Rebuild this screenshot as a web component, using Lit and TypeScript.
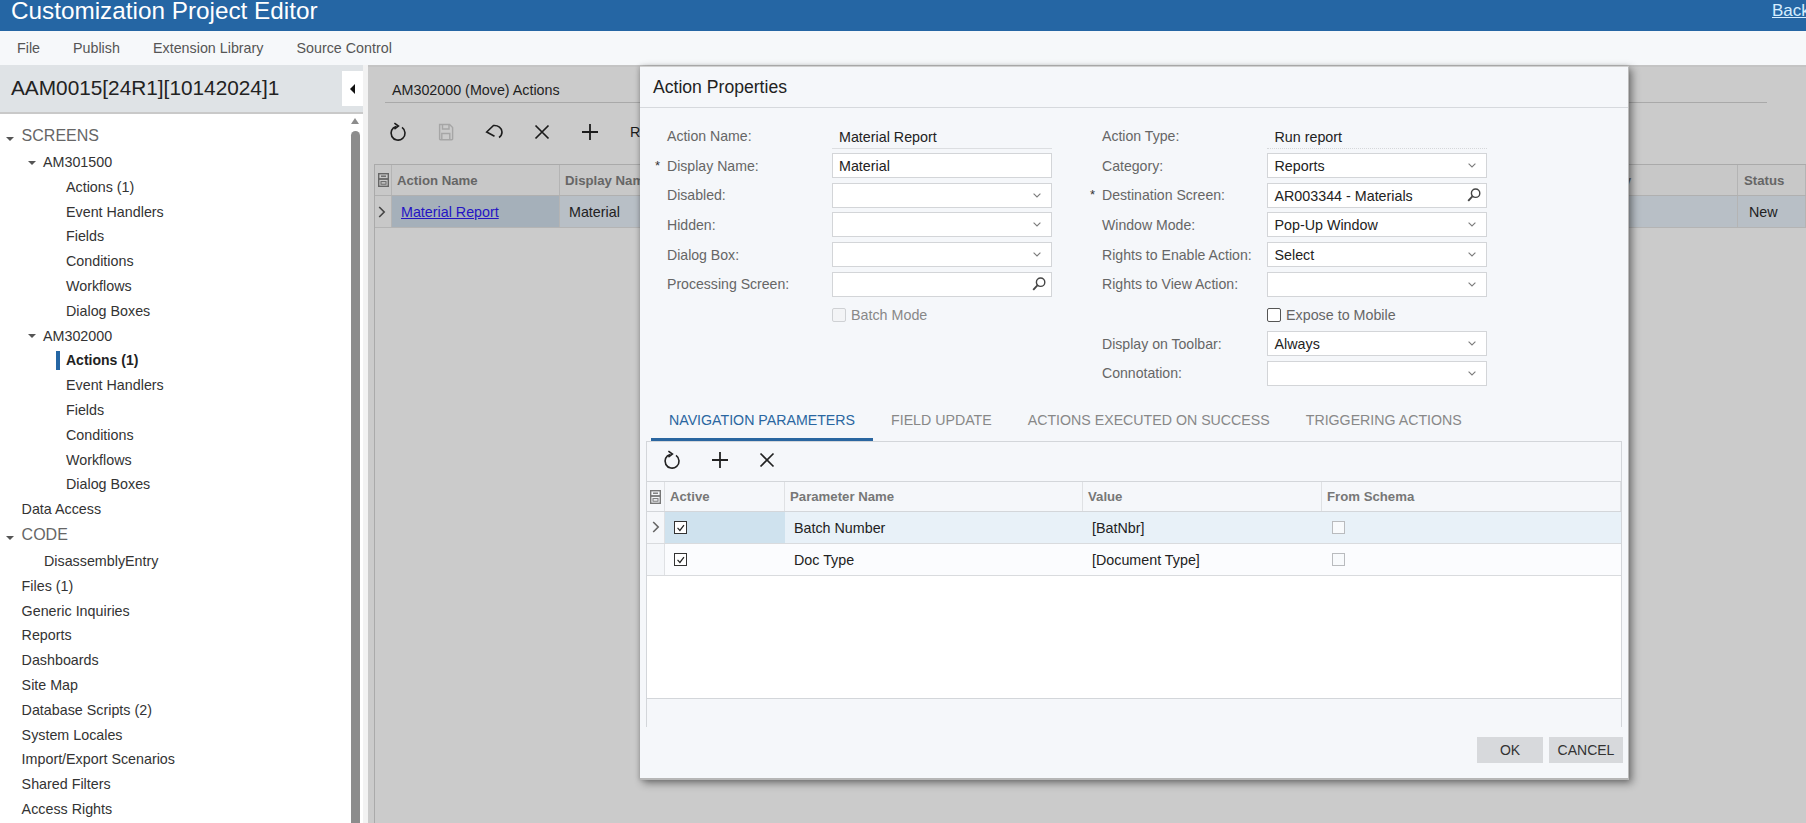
import { LitElement, html, css, svg } from "lit";
import { customElement } from "lit/decorators.js";

const refreshIcon = (c: string) => html`<svg width="20" height="20" viewBox="0 0 20 20" fill="none" stroke="${c}" stroke-width="1.6"><path d="M14 5.4A7 7 0 1 1 8.2 4.4"/><path d="M6.4 1.2 L10.4 4 L6.4 7"/></svg>`;
const saveIcon = html`<svg width="20" height="20" viewBox="0 0 20 20" fill="none" stroke="#a6a6a6" stroke-width="1.4"><path d="M4 2.5h10l3 3v11.5a.8.8 0 0 1-.8.8h-11.4a.8.8 0 0 1-.8-.8z" transform="translate(-.4 0)"/><path d="M6.5 2.5v4.5h6.5v-4.5M5.8 18v-6.5h8v6.5"/></svg>`;
const undoIcon = html`<svg width="20" height="20" viewBox="0 0 20 20" fill="none" stroke="#1c1c1c" stroke-width="1.6"><path d="M10.5 14.2 L2.7 10 L9.5 3.5 C14 3 18 6 18 10 C18 12.5 16.5 14.5 15 15.5"/></svg>`;
const closeIcon = (c: string) => html`<svg width="20" height="20" viewBox="0 0 20 20" fill="none" stroke="${c}" stroke-width="1.7"><path d="M3.5 3.5 L16.5 16.5 M16.5 3.5 L3.5 16.5"/></svg>`;
const plusIcon = (c: string) => html`<svg width="20" height="20" viewBox="0 0 20 20" fill="none" stroke="${c}" stroke-width="1.8"><path d="M10 2 V18 M2 10 H18"/></svg>`;
const chevronDown = html`<svg class="ctl-ic chev" width="8" height="5" viewBox="0 0 8 5" fill="none" stroke="#7c7c7c" stroke-width="1.1"><path d="M.6 .6 L4 4 L7.4 .6"/></svg>`;
const searchIcon = html`<svg class="ctl-ic" width="14" height="14" viewBox="0 0 14 14" fill="none" stroke="#444" stroke-width="1.4"><circle cx="8.6" cy="5.2" r="4.2"/><path d="M5.4 8.4 L1.2 12.8" stroke-width="1.9"/></svg>`;
const colIcon = (c: string) => html`<svg width="11" height="14" viewBox="0 0 11 14" fill="none" stroke="${c}"><rect x=".7" y=".7" width="9.6" height="12.6" stroke-width="1.4"/><path d="M3 3.2h5" stroke-width="1.4"/><path d="M.7 6h9.6" stroke-width="1.8"/><rect x="3" y="8.6" width="5" height="2.6" stroke-width="1"/></svg>`;
const rowChevron = (c: string) => html`<svg width="8" height="12" viewBox="0 0 8 12" fill="none" stroke="${c}" stroke-width="1.6"><path d="M1.2 1 L6.2 6 L1.2 11"/></svg>`;

const tick = svg`<path d="M3 7 L5.8 10 L10.6 3.6" fill="none" stroke="#222" stroke-width="1.4"/>`;

type Row = { t: string; k: string; bold?: boolean };
const tree: Row[] = [
  { t: "SCREENS", k: "sec" },
  { t: "AM301500", k: "scr" },
  { t: "Actions (1)", k: "leaf" },
  { t: "Event Handlers", k: "leaf" },
  { t: "Fields", k: "leaf" },
  { t: "Conditions", k: "leaf" },
  { t: "Workflows", k: "leaf" },
  { t: "Dialog Boxes", k: "leaf" },
  { t: "AM302000", k: "scr" },
  { t: "Actions (1)", k: "leaf", bold: true },
  { t: "Event Handlers", k: "leaf" },
  { t: "Fields", k: "leaf" },
  { t: "Conditions", k: "leaf" },
  { t: "Workflows", k: "leaf" },
  { t: "Dialog Boxes", k: "leaf" },
  { t: "Data Access", k: "top" },
  { t: "CODE", k: "sec" },
  { t: "DisassemblyEntry", k: "code" },
  { t: "Files (1)", k: "top" },
  { t: "Generic Inquiries", k: "top" },
  { t: "Reports", k: "top" },
  { t: "Dashboards", k: "top" },
  { t: "Site Map", k: "top" },
  { t: "Database Scripts (2)", k: "top" },
  { t: "System Locales", k: "top" },
  { t: "Import/Export Scenarios", k: "top" },
  { t: "Shared Filters", k: "top" },
  { t: "Access Rights", k: "top" },
];

type Field = { label: string; star?: boolean; kind: "text" | "ro" | "sel" | "look" | "check"; value?: string; dis?: boolean };
const leftF: Field[] = [
  { label: "Action Name:", kind: "ro", value: "Material Report" },
  { label: "Display Name:", star: true, kind: "text", value: "Material" },
  { label: "Disabled:", kind: "sel" },
  { label: "Hidden:", kind: "sel" },
  { label: "Dialog Box:", kind: "sel" },
  { label: "Processing Screen:", kind: "look" },
  { label: "", kind: "check", value: "Batch Mode", dis: true },
];
const rightF: Field[] = [
  { label: "Action Type:", kind: "ro", value: "Run report", dis: true },
  { label: "Category:", kind: "sel", value: "Reports" },
  { label: "Destination Screen:", star: true, kind: "look", value: "AR003344 - Materials" },
  { label: "Window Mode:", kind: "sel", value: "Pop-Up Window" },
  { label: "Rights to Enable Action:", kind: "sel", value: "Select" },
  { label: "Rights to View Action:", kind: "sel" },
  { label: "", kind: "check", value: "Expose to Mobile" },
  { label: "Display on Toolbar:", kind: "sel", value: "Always" },
  { label: "Connotation:", kind: "sel" },
];

@customElement("app-root")
export class AppRoot extends LitElement {
  static styles = css`
    :host { display: block; position: relative; width: 1806px; height: 823px; overflow: hidden; background: #fff;
      font-family: "Liberation Sans", Arial, sans-serif; font-size: 14.3px; color: #222; }
    .head { height: 31px; background: #2566a4; display: flex; justify-content: space-between; overflow: hidden; }
    .head .title { color: #fff; font-size: 24.3px; line-height: 21px; padding-left: 11px; }
    .head a { color: #d6eeff; font-size: 17px; line-height: 21px; height: 19px; text-decoration: underline; width: 34px; overflow: hidden; white-space: nowrap; }
    .menu { height: 34px; background: #f6f8fa; display: flex; align-items: center; color: #555; }
    .menu .m1 { margin-left: 17px; width: 56px; }
    .menu .m2 { width: 80px; }
    .menu .m3 { width: 143.5px; }
    .main { display: flex; height: 758px; }
    .side { width: 363px; flex: none; display: flex; flex-direction: column; }
    .side-head { height: 47px; flex: none; background: #dfe3e6; border-bottom: 2px solid #c9c9c9; display: flex; align-items: center; justify-content: space-between; }
    .side-head .pn { font-size: 20.8px; padding-left: 11px; color: #222; padding-bottom: 2px; }
    .collapse { width: 21px; height: 35px; background: #fff; display: flex; align-items: center; padding-left: 8px; box-sizing: border-box; }
    .collapse i { border-style: solid; border-width: 5px 5px 5px 0; border-color: transparent #111 transparent transparent; }
    .side-body { flex: 1; display: flex; min-height: 0; }
    .tree { flex: 1; padding-top: 8.6px; }
    .row { height: 24.8px; display: flex; align-items: center; color: #333; white-space: nowrap; position: relative; }
    .row.sec { height: 27px; box-sizing: border-box; font-size: 16px; color: #666; padding-left: 21.6px; }
    .row.scr { padding-left: 43px; }
    .row.leaf { padding-left: 66px; }
    .row.top { padding-left: 21.6px; }
    .row.code { padding-left: 44px; padding-top: 1px; box-sizing: border-box; }
    .row.bold { font-weight: bold; color: #222; font-size: 14px; }
    .row.bold::before { content: ""; position: absolute; left: 56px; top: 3px; width: 4px; height: 19px; background: #2566a4; }
    .tri { position: absolute; border-style: solid; border-width: 4px 4px 0 4px; border-color: #555 transparent transparent transparent; }
    .row.sec .tri { left: 6px; top: 14px; }
    .row.scr .tri { left: 28px; top: 11px; }
    .scroll { width: 12px; flex: none; position: relative; }
    .scroll .up { position: absolute; left: 0; top: 4px; border-style: solid; border-width: 0 4.5px 6px 4.5px; border-color: transparent transparent #8c8c8c transparent; }
    .scroll .bar { position: absolute; left: 0; top: 17px; bottom: 0; width: 9px; background: #8c8c8c; border-radius: 5px 5px 0 0; }
    .split { width: 5px; flex: none; background: #f2f2f2; }
    .pane { flex: 1; background: #cbcbcb; display: flex; flex-direction: column; padding-left: 6px; min-width: 0; border-top: 2px solid #c4c4c4; }
    .ptab { margin: 0 39px 0 11px; height: 25px; padding-top: 10px; border-bottom: 1px solid #a9a9a9; display: flex; align-items: center; padding-left: 7px; color: #1f1f1f; }
    .ptool { height: 58px; padding-bottom: 3px; display: flex; align-items: center; padding-left: 14px; gap: 28px; color: #1c1c1c; }
    .ptool span { margin-left: 2px; }
    .gridb { border-left: 1px solid #aaa; flex: 1; }
    .g-h, .g-r { display: grid; grid-template-columns: 17px 168px 1009px 169px 1fr; height: 32px; }
    .g-h { border-top: 1px solid #aaa; border-bottom: 1px solid #b0b0b0; background: #c8c8c8; color: #666; font-weight: bold; font-size: 13.2px; box-sizing: border-box; }
    .g-r { border-bottom: 1px solid #b4b4b4; box-sizing: border-box; background: #b8bfc6; }
    .g-h > div, .g-r > div { display: flex; align-items: center; padding-left: 5px; border-right: 1px solid #b4b4b4; white-space: nowrap; min-width: 0; }
    .g-h > div:first-child, .g-r > div:first-child { padding-left: 3px; }
    .g-h > div:last-child { padding-left: 6px; }
    .g-r > .sel { background: #a5b0ba; padding-left: 9px; }
    .g-r > .st { padding-left: 11px; }
    .g-r > .dn { padding-left: 9px; }
    .g-r a { color: #2414c4; text-decoration: underline; }
    .g-r > div:first-child { background: #c8c8c8; }
    .dlg { position: absolute; left: 640px; top: 66px; width: 989px; height: 714px; box-sizing: border-box; background: #f5f7fa; border-top: 1px solid #d0d0d0; border-right: 1px solid #bbb; border-bottom: 2px solid #b6b6b6; box-shadow: 3px 3px 8px rgba(0,0,0,.45), -1px 0 4px rgba(0,0,0,.15); display: flex; flex-direction: column; }
    .dlg-t { height: 39px; padding-top: 1px; flex: none; border-bottom: 1px solid #d6d9dd; display: flex; align-items: center; padding-left: 13px; font-size: 17.6px; color: #222; }
    .form { display: flex; padding: 15.4px 0 0 17px; gap: 40px; height: 278px; flex: none; box-sizing: border-box; }
    .fcol { display: flex; flex-direction: column; gap: 4.7px; }
    .frow { display: grid; grid-template-columns: 10px 165px 220px; height: 25px; align-items: center; }
    .star { font-size: 13px; color: #333; line-height: 10px; margin-left: -2px; }
    .lab { color: #666; font-size: 14.1px; white-space: nowrap; }
    .ctl { grid-column: 3; height: 25px; box-sizing: border-box; border: 1px solid #d3d5d8; background: #fff; display: flex; align-items: center; justify-content: space-between; padding: 0 5px 0 6px; color: #222; }
    .ctl > span { padding-top: 1px; }
    .fcol:last-child .ctl { padding-left: 6.5px; }
    .ctl .ctl-ic { flex: none; margin-left: auto; }
    .ctl .chev { margin-right: 5px; }
    .ro { grid-column: 3; height: 25px; padding-top: 1px; box-sizing: border-box; margin-top: 1px; border-bottom: 1px solid #dcdee1; display: flex; align-items: center; padding-left: 7px; color: #222; }
    .ro.dot { border-bottom: 1px dotted #d5d7da; padding-left: 7.5px; }
    .chk { grid-column: 3; display: flex; align-items: center; gap: 5px; color: #666; padding-top: 1px; }
    .box { width: 14px; height: 14px; box-sizing: border-box; border: 1px solid #555; border-radius: 2px; background: #fff; display: inline-block; flex: none; }
    .chk.dis { color: #888; }
    .chk.dis .box { border-color: #cfd1d4; background: #f3f4f6; }
    .tabs { display: flex; margin-left: 11px; height: 40px; flex: none; margin-top: 15px; font-size: 14.2px; }
    .tab { padding: 0 18px; display: flex; align-items: center; color: #888; height: 37px; white-space: nowrap; }
    .tab.on { color: #2a66a0; border-bottom: 3px solid #2a66a0; }
    .panel { margin: 0 6px 0 6px; height: 286px; flex: none; box-sizing: border-box; border: 1px solid #d3d6da; border-bottom: 0; display: flex; flex-direction: column; }
    .ptl { height: 39px; padding-bottom: 4px; box-sizing: border-box; flex: none; display: flex; align-items: center; padding-left: 15px; gap: 27.5px; }
    .pg { height: 218px; flex: none; box-sizing: border-box; border-top: 1px solid #d3d6da; border-bottom: 1px solid #d3d6da; background: #fff; }
    .pg-h, .pg-r { display: grid; grid-template-columns: 18px 120px 298px 239px 1fr; }
    .pg-h { height: 30px; box-sizing: border-box; background: #f5f7fa; color: #777; font-weight: bold; font-size: 13.2px; border-bottom: 1px solid #d3d6da; }
    .pg-h > div { display: flex; align-items: center; padding-left: 5px; border-right: 1px solid #dfe1e4; }
    .pg-h > div:first-child { padding-left: 3px; }
    .pg-r { height: 32px; box-sizing: border-box; background: #fbfcfe; border-bottom: 1px solid #d9dbde; }
    .pg-r > div { display: flex; align-items: center; padding: 1px 0 0 9px; min-width: 0; }
    .pg-r > .c0 { padding: 0 0 2px 5px; background: #f5f7fa; border-right: 1px solid #dfe1e4; }
    .pg-r > .ck { padding: 0 0 0 9px; }
    .pg-r.a { background: #e8f1f8; }
    .pg-r.a > .ck.act { background: #cfe2ee; }
    .pg-r > .sc { padding: 0 0 0 10px; }
    .pg-r .cb { width: 13px; height: 13px; box-sizing: border-box; border: 1.4px solid #333; background: #fff; display: block; }
    .pg-r .cb.off { border: 1px solid #b9bbbe; background: #f8fafc; }
    .foot { display: flex; justify-content: flex-end; gap: 6px; padding: 10px 5px 0 0; }
    .btn { height: 26px; background: #d7d9dc; display: flex; align-items: center; justify-content: center; color: #333; font-size: 14px; }
    .btn.ok { width: 66px; }
    .btn.cn { width: 74px; }
  `;

  private field(f: Field) {
    const star = html`<span class="star">${f.star ? "*" : ""}</span>`;
    const lab = html`<span class="lab">${f.label}</span>`;
    if (f.kind === "check") {
      return html`<div class="frow"><span></span><span></span><label class="chk ${f.dis ? "dis" : ""}"><span class="box"></span>${f.value}</label></div>`;
    }
    if (f.kind === "ro") {
      return html`<div class="frow">${star}${lab}<div class="ro ${f.dis ? "dot" : ""}">${f.value}</div></div>`;
    }
    const ic = f.kind === "sel" ? chevronDown : f.kind === "look" ? searchIcon : "";
    return html`<div class="frow">${star}${lab}<div class="ctl"><span>${f.value ?? ""}</span>${ic}</div></div>`;
  }

  private paramRow(name: string, val: string, active: boolean) {
    return html`<div class="pg-r ${active ? "a" : ""}">
      <div class="c0">${active ? rowChevron("#666") : ""}</div>
      <div class="ck act"><svg class="cb" viewBox="0 0 13 13">${tick}</svg></div>
      <div>${name}</div><div>${val}</div>
      <div class="sc"><span class="cb off"></span></div>
    </div>`;
  }

  render() {
    return html`
      <div class="head"><div class="title">Customization Project Editor</div><a>Back</a></div>
      <div class="menu"><span class="m1">File</span><span class="m2">Publish</span><span class="m3">Extension Library</span><span>Source Control</span></div>
      <div class="main">
        <div class="side">
          <div class="side-head"><span class="pn">AAM0015[24R1][10142024]1</span><span class="collapse"><i></i></span></div>
          <div class="side-body">
            <div class="tree">
              ${tree.map((r) => html`<div class="row ${r.k} ${r.bold ? "bold" : ""}">${r.k === "sec" || r.k === "scr" ? html`<span class="tri"></span>` : ""}${r.t}</div>`)}
            </div>
            <div class="scroll"><span class="up"></span><span class="bar"></span></div>
          </div>
        </div>
        <div class="split"></div>
        <div class="pane">
          <div class="ptab">AM302000 (Move) Actions</div>
          <div class="ptool">
            ${refreshIcon("#1c1c1c")}${saveIcon}${undoIcon}${closeIcon("#1c1c1c")}${plusIcon("#1c1c1c")}<span>Reload</span>
          </div>
          <div class="gridb">
            <div class="g-h"><div>${colIcon("#666")}</div><div>Action Name</div><div>Display Name</div><div>Category</div><div>Status</div></div>
            <div class="g-r"><div>${rowChevron("#444")}</div><div class="sel"><a>Material Report</a></div><div class="dn">Material</div><div></div><div class="st">New</div></div>
          </div>
        </div>
      </div>
      <div class="dlg">
        <div class="dlg-t">Action Properties</div>
        <div class="form">
          <div class="fcol">${leftF.map((f) => this.field(f))}</div>
          <div class="fcol">${rightF.map((f) => this.field(f))}</div>
        </div>
        <div class="tabs">
          <div class="tab on">NAVIGATION PARAMETERS</div><div class="tab">FIELD UPDATE</div><div class="tab">ACTIONS EXECUTED ON SUCCESS</div><div class="tab">TRIGGERING ACTIONS</div>
        </div>
        <div class="panel">
          <div class="ptl">${refreshIcon("#222")}${plusIcon("#222")}${closeIcon("#222")}</div>
          <div class="pg">
            <div class="pg-h"><div>${colIcon("#777")}</div><div>Active</div><div>Parameter Name</div><div>Value</div><div>From Schema</div></div>
            ${this.paramRow("Batch Number", "[BatNbr]", true)}
            ${this.paramRow("Doc Type", "[Document Type]", false)}
          </div>
        </div>
        <div class="foot"><div class="btn ok">OK</div><div class="btn cn">CANCEL</div></div>
      </div>
    `;
  }
}
